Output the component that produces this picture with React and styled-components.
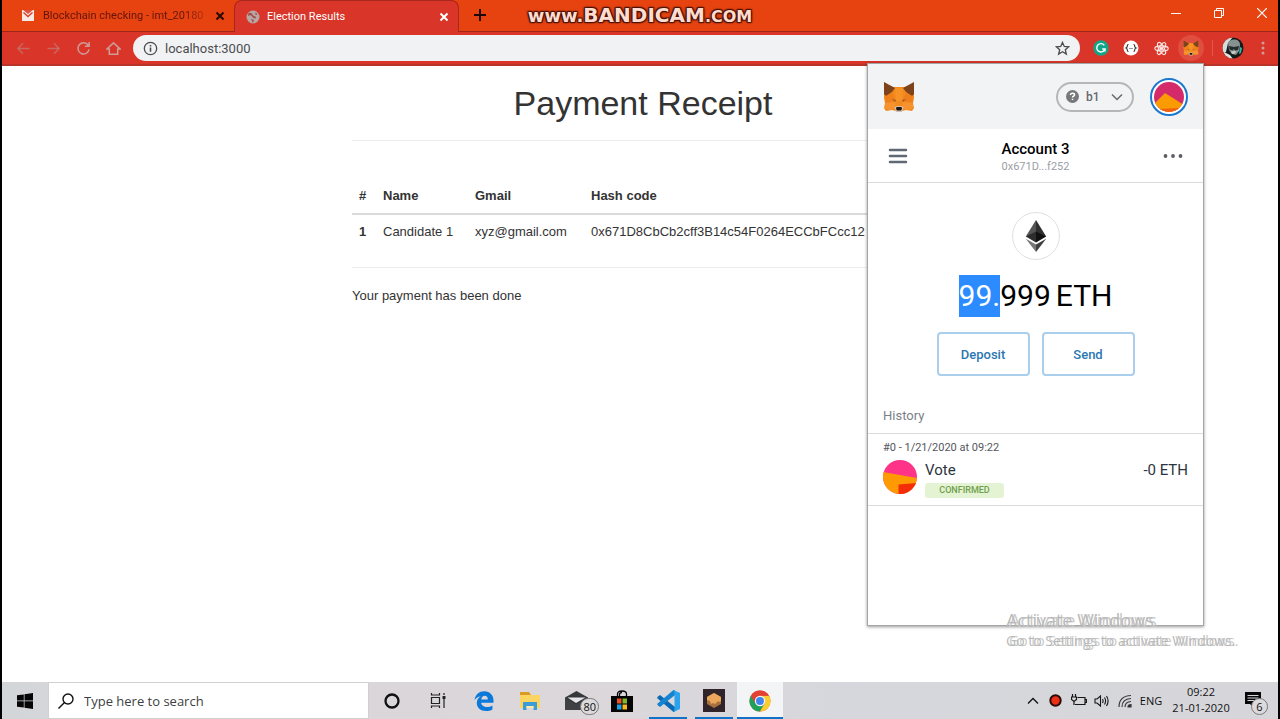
import React from "react";
import styled, { createGlobalStyle, css } from "styled-components";

const ui = `"Open Sans", "Noto Sans", sans-serif`;
const page = `"Liberation Sans", Arial, sans-serif`;
const wallet = `Roboto, "Liberation Sans", sans-serif`;

const GlobalStyle = createGlobalStyle`
  *, *::before, *::after { box-sizing: border-box; }
  body { margin: 0; background: #000; }
  button, input { font: inherit; color: inherit; border: 0; background: none; padding: 0; margin: 0; }
  svg { display: block; flex: none; }
  h1, h2, p { margin: 0; }
`;

const Screen = styled.div`
  position: relative;
  display: flex;
  flex-direction: column;
  min-height: 100vh;
  overflow: hidden;
  background: #fff;
  border: solid #000;
  border-width: 0 2px;
  font-family: ${ui};
`;

/* ---------- browser chrome ---------- */

const TabStrip = styled.header`
  position: relative;
  display: flex;
  align-items: stretch;
  height: 32px;
  background: #e64310;
  border-bottom: 1px solid #9f2419;
`;

const Tab = styled.div`
  display: flex;
  align-items: center;
  gap: ${(p) => (p.$active ? 7 : 9)}px;
  width: ${(p) => (p.$active ? 225 : 232)}px;
  padding: 0 8px 0 ${(p) => (p.$active ? 11 : 20)}px;
  font-family: Roboto, ${ui};
  font-size: 11px;
  white-space: nowrap;
  color: #65140a;
  ${(p) =>
    p.$active &&
    css`
      color: #fff;
      background: #d93529;
      border: 1px solid #a8261b;
      border-bottom: 0;
      border-radius: 8px 8px 0 0;
      margin-bottom: -1px;
    `}
`;

const TabTitle = styled.span`
  flex: 1;
  ${(p) => p.$fade && css`mask-image: linear-gradient(90deg, #000 86%, rgba(0, 0, 0, 0.3));`}
`;

const IconButton = styled.button`
  display: flex;
  align-items: center;
  justify-content: center;
  width: ${(p) => p.$w || 30}px;
  height: ${(p) => p.$h || 30}px;
  color: ${(p) => p.$color || "inherit"};
`;

const ActiveExtension = styled(IconButton)`
  margin-left: 2px;
  border-radius: 50%;
  background: #df4e3f;
`;

const WindowControls = styled.div`
  display: flex;
  gap: 10px;
  margin-left: auto;
  color: #fff;
`;

const Recorder = styled.div`
  position: absolute;
  left: 50%;
  top: 0;
  width: 240px;
  margin-left: -120px;
  display: flex;
  align-items: baseline;
  justify-content: center;
  line-height: 30px;
  font-family: "DejaVu Sans", sans-serif;
  font-weight: 700;
  font-size: 18px;
  color: #ffdcd0;
  text-shadow: 1px 1px 1px #4a1206, -1px -1px 1px #4a1206, 1px -1px 1px #4a1206, -1px 1px 1px #4a1206, 0 0 3px #4a1206;
`;
const RecorderName = styled.span`
  font-size: 20px;
`;
const RecorderDomain = styled.span`
  font-size: 16px;
`;

const Toolbar = styled.div`
  display: flex;
  align-items: center;
  height: 34px;
  padding-left: 6px;
  background: #d93529;
  border-bottom: 2px solid #b93429;
`;

const AddressBar = styled.label`
  display: flex;
  flex: 1;
  align-items: center;
  gap: 7px;
  height: 26px;
  margin: 0 6px 0 5px;
  padding: 0 10px;
  border-radius: 13px;
  background: #f1f2f4;
  color: #4b4d50;
`;
const AddressInput = styled.input`
  flex: 1;
  min-width: 0;
  font-family: Roboto, ${ui};
  font-size: 13px;
  outline: 0;
`;
const Divider = styled.span`
  width: 1px;
  height: 16px;
  margin: 0 5px 0 8px;
  background: #e2564b;
`;

/* ---------- web page ---------- */

const Page = styled.main`
  flex: 1;
  padding-left: 6px;
  background: #fff;
`;
const Receipt = styled.section`
  max-width: 582px;
  margin: 0 auto;
  padding-top: 18px;
  font-family: ${page};
  font-size: 13px;
  line-height: 19px;
  color: #333;
`;
const Title = styled.h1`
  font-size: 34px;
  line-height: 38px;
  font-weight: 400;
  text-align: center;
`;
const Rule = styled.hr`
  height: 1px;
  margin: 18px 0;
  border: 0;
  background: #ececec;
`;
const Table = styled.table`
  width: 100%;
  margin-top: 37px;
  border-collapse: collapse;
  text-align: left;
  th, td { padding: 8px 7px; }
  tbody th, tbody td { padding-top: 7px; }
  thead th { border-bottom: 2px solid #dadada; }
`;
const Col = styled.col`
  width: ${(p) => p.$w};
`;

/* ---------- wallet popup ---------- */

const Popup = styled.aside`
  position: absolute;
  top: 63px;
  right: 74px;
  width: 337px;
  min-height: 563px;
  background: #fff;
  border: 1px solid #a5a5a5;
  box-shadow: 0 1px 3px rgba(0, 0, 0, 0.4);
  font-family: ${wallet};
  color: #000;
`;
const PopupHeader = styled.div`
  display: flex;
  align-items: center;
  gap: 16px;
  height: 65px;
  padding: 0 15px;
  background: #f1f3f4;
`;
const Network = styled.button`
  display: flex;
  align-items: center;
  gap: 7px;
  width: 78px;
  height: 30px;
  margin-left: auto;
  padding: 0 9px 0 8px;
  border: 2px solid #b5b6b9;
  border-radius: 15px;
  font-size: 12px;
  font-weight: 500;
  color: #67696d;
  svg:last-child { margin-left: auto; }
`;
const Identicon = styled.button`
  width: 38px;
  height: 38px;
  padding: 2px;
  border: 2px solid #1c78cc;
  border-radius: 50%;
  background: #fff;
`;
const AccountBar = styled.div`
  display: flex;
  align-items: center;
  justify-content: space-between;
  height: 54px;
  padding: 0 15px;
  border-bottom: 1px solid #d9dadc;
`;
const Account = styled.div`
  padding-top: 2px;
  text-align: center;
`;
const AccountName = styled.h2`
  font-size: 15px;
  line-height: 20px;
  font-weight: 500;
`;
const Small = styled.p`
  font-size: 11px;
  line-height: 16px;
  color: ${(p) => p.$color || "#9b9ea3"};
`;
const Balance = styled.div`
  display: flex;
  flex-direction: column;
  align-items: center;
  padding-top: 29px;
`;
const Coin = styled.div`
  display: flex;
  align-items: center;
  justify-content: center;
  width: 48px;
  height: 48px;
  border: 1px solid #dfe0e2;
  border-radius: 50%;
`;
const Amount = styled.p`
  display: flex;
  gap: 5px;
  margin: 15px 0;
  font-size: 30px;
  line-height: 42px;
`;
const Selected = styled.mark`
  display: inline-block;
  background: #2c8cff;
  color: #fff;
`;
const Actions = styled.div`
  display: flex;
  gap: 12px;
`;
const Action = styled.button`
  width: 93px;
  height: 44px;
  border: 2px solid #a9cfec;
  border-radius: 4px;
  font-size: 13px;
  font-weight: 500;
  color: #2b77b1;
`;
const HistoryTitle = styled.h2`
  margin-top: 22px;
  padding: 9px 15px;
  border-bottom: 1px solid #d9dadc;
  font-size: 13px;
  line-height: 17px;
  font-weight: 400;
  color: #7b7f88;
`;
const Transaction = styled.div`
  padding: 6px 15px 7px;
  border-bottom: 1px solid #d9dadc;
`;
const TxRow = styled.div`
  display: flex;
  gap: 8px;
  padding-top: 4px;
`;
const TxBody = styled.div`
  flex: 1;
  font-size: 15px;
  line-height: 20px;
  color: #2d3440;
`;
const TxAmount = styled.span`
  font-size: 15px;
  line-height: 20px;
  color: #2d3440;
`;
const Status = styled.div`
  width: 79px;
  margin-top: 3px;
  border-radius: 3px;
  background: #e4f3d4;
  font-size: 9px;
  font-weight: 500;
  line-height: 15px;
  text-align: center;
  color: #6fa04c;
`;

/* ---------- desktop ---------- */

const Watermark = styled.div`
  position: absolute;
  right: 47px;
  bottom: 68px;
  width: 225px;
  font-size: 14px;
  line-height: 20px;
  white-space: nowrap;
  color: #b9b9b9;
  text-shadow: 3px 0 0 #c9c9c9;
  pointer-events: none;
`;
const WatermarkTitle = styled.p`
  font-size: 18px;
  line-height: 22px;
`;

const Taskbar = styled.footer`
  display: flex;
  height: 37px;
  background: linear-gradient(90deg, #d3d6d9 0, #dbd6d9 30%, #dcd7da 45%, #d6d7dc 65%, #d6d6da 100%);
  color: #111;
`;
const Search = styled.label`
  display: flex;
  align-items: center;
  gap: 10px;
  width: 321px;
  padding-left: 9px;
  background: #fff;
  border: 1px solid #cfd0d2;
`;
const SearchInput = styled.input`
  flex: 1;
  min-width: 0;
  font-size: 13px;
  outline: 0;
  &::placeholder { color: #3d3f42; opacity: 1; }
`;
const Task = styled.button`
  position: relative;
  display: flex;
  align-items: center;
  justify-content: center;
  width: 46px;
  background: ${(p) => (p.$active ? "#f3f4f6" : "none")};
  &::after {
    content: "";
    display: ${(p) => (p.$open || p.$active ? "block" : "none")};
    position: absolute;
    bottom: 0;
    left: ${(p) => (p.$active ? 0 : 4)}px;
    right: ${(p) => (p.$active ? 0 : 4)}px;
    height: 2px;
    background: #1173c7;
  }
`;
const Badge = styled.span`
  position: absolute;
  right: ${(p) => p.$right}px;
  bottom: 4px;
  min-width: 17px;
  padding: 0 2px;
  border: 1px solid #77787b;
  border-radius: 9px;
  background: #dcdadd;
  font-size: 11px;
  line-height: 15px;
  text-align: center;
`;
const Tray = styled.div`
  display: flex;
  align-items: center;
  margin-left: auto;
  font-size: 11px;
`;
const TrayButton = styled.button`
  position: relative;
  display: flex;
  align-items: center;
  justify-content: center;
  width: ${(p) => p.$w || 23}px;
  height: 37px;
`;
const Clock = styled.time`
  width: 70px;
  padding-bottom: 2px;
  line-height: 16px;
  text-align: center;
`;

/* ---------- drawings ---------- */

const Line = ({ size = 16, w = 1.5, box = 16, children }) => (
  <svg width={size} height={size} viewBox={`0 0 ${box} ${box}`} fill="none" stroke="currentColor" strokeWidth={w}>
    {children}
  </svg>
);

const Cross = ({ size = 10, w = 2 }) => (
  <Line size={size} box={10} w={w}>
    <path d="M1.500 1.500l7 7M8.500 1.500l-7 7" />
  </Line>
);

const Fox = ({ size }) => (
  <svg width={size} height={size} viewBox="0 0 32 32">
    <path d="M1 3l9 3h12l9-3v14l-1 5 1 5-2 3-6-1-4 1h-6l-4-1-6 1-2-3 1-5-1-5z" fill="#f28a1e" />
    <path d="M1 1l11 6-3 4-6 4-2-2zM31 1L20 7l3 4 6 4 2-2z" fill="#7d431c" />
    <path d="M12 7h8l-1 13h-6z" fill="#f79226" />
    <path d="M3 15l6-3 4 8-11 2zM29 15l-6-3-4 8 11 2z" fill="#ee7f1b" />
    <path d="M2 22l10-1 1 7-6 1-5-2zM30 22l-10-1-1 7 6 1 5-2z" fill="#f7932f" />
    <path d="M9 18l4 1-1 2zM23 18l-4 1 1 2z" fill="#a85a25" />
    <path d="M11.500 26l2.500-1h4l2.500 1-1.500 5h-6z" fill="#d5bfb2" />
    <path d="M13.500 26h5l.5 2-1 1.500h-4L13 28z" fill="#1d1714" />
  </svg>
);

const Gmail = () => (
  <svg width="12" height="12" viewBox="0 0 12 12">
    <path d="M0 0h12v11H0z" fill="#fbe9e3" />
    <path d="M1 0h10L6 4z" fill="#e15140" />
    <path d="M1.500 2.500L6 6.500l4.500-4" fill="none" stroke="#d8402c" strokeWidth="1.500" />
  </svg>
);

const Globe = () => (
  <svg width="14" height="14" viewBox="0 0 14 14">
    <circle cx="7" cy="7" r="6.500" fill="#b9a6a3" />
    <path d="M2.500 3q3-1 4 1.500T10 6.500l-.5 2Q7 8.500 6 6.500T2 6zM5 9l3 1-1 3zM9.500 2l2 2.500-2 .5z" fill="#a04e49" />
  </svg>
);

const Info = () => (
  <Line size={15} w={1.400}>
    <circle cx="8" cy="8" r="6.600" />
    <path d="M8 7v4.500M8 4.200v1.600" strokeWidth="1.700" />
  </Line>
);

const Star = () => (
  <Line size={15} w={1.400}>
    <path d="M8 1.500l1.900 4.300 4.600.4-3.500 3.100 1.100 4.600L8 11.400l-4.100 2.500L5 9.300 1.500 6.200l4.600-.4z" />
  </Line>
);

const Grammarly = () => (
  <svg width="16" height="16" viewBox="0 0 16 16">
    <circle cx="8" cy="8" r="7.700" fill="#12a688" />
    <path d="M11.300 5.200A4.200 4.200 0 1 0 12 9H9.200M12 9v2.500" fill="none" stroke="#fff" strokeWidth="1.400" />
  </svg>
);

const Json = () => (
  <svg width="16" height="16" viewBox="0 0 16 16">
    <circle cx="8" cy="8" r="7.500" fill="#fff" />
    <path d="M5.500 4.500q-1.200 0-1.200 1.500t-1.300 2q1.300.5 1.300 2t1.200 1.500M10.500 4.500q1.200 0 1.200 1.500t1.300 2q-1.300.5-1.300 2t-1.200 1.500" fill="none" stroke="#333" strokeWidth="1.200" />
    <path d="M6.500 8.500h1M8.500 8.500h1" stroke="#333" strokeWidth="1.200" />
  </svg>
);

const ReactMark = () => (
  <svg width="15" height="15" viewBox="0 0 16 16" fill="none" stroke="#fbe7e5" strokeWidth="1.200">
    <ellipse cx="8" cy="8" rx="7.200" ry="2.800" />
    <ellipse cx="8" cy="8" rx="7.200" ry="2.800" transform="rotate(60 8 8)" />
    <ellipse cx="8" cy="8" rx="7.200" ry="2.800" transform="rotate(120 8 8)" />
    <circle cx="8" cy="8" r="1.300" fill="#fbe7e5" />
  </svg>
);

const Portrait = () => (
  <svg width="22" height="22" viewBox="0 0 22 22">
    <clipPath id="portrait"><circle cx="11" cy="11" r="10.500" /></clipPath>
    <g clipPath="url(#portrait)">
      <path d="M0 0h22v22H0z" fill="#141b1b" />
      <path d="M0 0h11L6 6l-2 9-4 1z" fill="#d5ded8" />
      <path d="M6 6q2-4 7-3.500T18 8l-1 6-3 4-4-1-3-4z" fill="#87918f" />
      <path d="M7 9l5 1 5-1-1 4-3 .5-1-1.500-1.500 1.500-3-1z" fill="#232b2e" />
      <path d="M9 14.500l5-.5-1 2.500-3 .5z" fill="#c9cfcb" />
      <path d="M2 15l6 3 3 4H2z" fill="#dfe5e1" />
      <path d="M18 10l2 1-1 5-2 1z" fill="#39b3a0" />
    </g>
  </svg>
);

const AccountArt = () => (
  <svg width="30" height="30" viewBox="0 0 30 30">
    <clipPath id="account-art"><circle cx="15" cy="15" r="15" /></clipPath>
    <g clipPath="url(#account-art)">
      <path d="M0 0h30v30H0z" fill="#d42a69" />
      <path d="M0 22L11 11l19 12v7H0z" fill="#fb9b04" />
      <path d="M4 27l22-1v4H4z" fill="#f1600d" />
    </g>
  </svg>
);

const ContractArt = () => (
  <svg width="34" height="34" viewBox="0 0 34 34">
    <clipPath id="contract-art"><circle cx="17" cy="17" r="17" /></clipPath>
    <g clipPath="url(#contract-art)">
      <path d="M0 0h34v34H0z" fill="#ff3489" />
      <path d="M0 12l34 6v16H0z" fill="#ff9a02" />
      <path d="M15.500 24.500L34 23v11H15.500z" fill="#f52c08" />
    </g>
  </svg>
);

const Ether = () => (
  <svg width="22" height="34" viewBox="0 0 22 34">
    <path d="M11 1v17.500L.8 17.500z" fill="#555" />
    <path d="M11 1l10.200 16.500L11 18.500z" fill="#303030" />
    <path d="M11 12.500v11L.8 17.500z" fill="#2d2d2d" />
    <path d="M11 12.500l10.200 5L11 23.500z" fill="#111" />
    <path d="M.8 19.800L11 25.500V33z" fill="#777" />
    <path d="M21.200 19.800L11 25.500V33z" fill="#404040" />
  </svg>
);

const WindowsLogo = () => (
  <svg width="16" height="16" viewBox="0 0 16 16" fill="#050505">
    <path d="M0 2.300l6.800-.9v6.200H0zM7.500 1.300L16 0v7.600H7.500zM0 8.300h6.800v6.300L0 13.700zM7.500 8.300H16V16l-8.500-1.300z" />
  </svg>
);

const TaskView = () => (
  <svg width="17" height="15" viewBox="0 0 17 15" fill="none" stroke="#222" strokeWidth="1.200">
    <path d="M1.500 0v2h8V0M1.500 15v-2h8v2M1.500 4.500h8v6h-8zM14 0v2M14 6v9" />
    <path d="M12.500 3h3v3h-3z" fill="#222" stroke="none" />
  </svg>
);

const Edge = () => (
  <svg width="20" height="20" viewBox="0 0 20 20">
    <path d="M.5 9C1.500 3.500 5.300.3 10.300.3c5.500 0 9.200 3.900 9.200 9.300v2.200H7.200c.2 2.700 2.700 4.200 5.600 4.200 2 0 4-.6 5.600-1.600v4c-1.800 1-4 1.500-6.400 1.500-5.600 0-9.200-3.300-9.200-8 0-3 1.500-5.300 4-6.700C4 5.800 2 7 .5 9zm6.800-.6h6.500c0-2.200-1.100-3.600-3.100-3.600-1.900 0-3.200 1.500-3.400 3.600z" fill="#0b79da" />
  </svg>
);

const Folder = () => (
  <svg width="22" height="19" viewBox="0 0 22 19">
    <path d="M1 1h9l2 3H1z" fill="#dd9a20" />
    <path d="M1 4h20v13H1z" fill="#fcd462" />
    <path d="M4 11h14v8h-3.500v-4h-7v4H4z" fill="#3d9bd8" />
    <path d="M7.500 15h7v2h-7z" fill="#fcecae" />
  </svg>
);

const Mail = () => (
  <svg width="23" height="20" viewBox="0 0 23 20">
    <path d="M0 6.500L11.500 0 23 6.500V19H0z" fill="#37383c" />
    <path d="M2.500 6.500h18L11 12z" fill="#e6e5e7" />
    <path d="M0 7l11 6.500L23 7v12H0z" fill="#404145" />
  </svg>
);

const Store = () => (
  <svg width="22" height="22" viewBox="0 0 22 22">
    <path d="M6.500 7V4q0-3 4.500-3t4.500 3v3M8.500 6V4.500q0-2 2.500-2" fill="none" stroke="#050505" strokeWidth="1.300" />
    <path d="M0 6h22v16H0z" fill="#050505" />
    <path d="M6 8.500h4.500v5H6z" fill="#ee5028" />
    <path d="M11.500 8.500H16v5h-4.500z" fill="#7db928" />
    <path d="M6 14.500h4.500v5H6z" fill="#1ba0e6" />
    <path d="M11.500 14.500H16v5h-4.500z" fill="#fbb81c" />
  </svg>
);

const Code = () => (
  <svg width="23" height="22" viewBox="0 0 23 22">
    <path d="M1 6.500l2-1.500L18 17v4.500L16.500 22 0 8z" fill="#0b6ab5" />
    <path d="M1 15.500L3 17 18 5V.5L16.500 0 0 14z" fill="#1583d0" />
    <path d="M16.500 0L23 3v16l-6.500 3 1-3V3z" fill="#2ba3ee" />
  </svg>
);

const Ganache = () => (
  <svg width="22" height="23" viewBox="0 0 22 23">
    <path d="M0 0h22v23H0z" fill="#30242a" />
    <path d="M4 8l7-4 7 4v7l-7 4-7-4z" fill="#a9713d" />
    <path d="M4 8l7-4 7 4v4l-2 1-1-1-3 3-2-1-2 1-1-3-3-1z" fill="#eba65c" />
  </svg>
);

const Chrome = () => (
  <svg width="22" height="22" viewBox="0 0 22 22">
    <circle cx="11" cy="11" r="10.500" fill="#e34133" />
    <path d="M1.900 5.750A10.500 10.500 0 0 0 11 21.500l4.550-7.870L11 11z" fill="#1fa15a" />
    <path d="M20.100 5.750A10.500 10.500 0 0 1 11 21.500l4.550-7.870L11 5.750z" fill="#fccd2f" />
    <path d="M11 5.750h9.100A10.500 10.500 0 0 0 1.900 5.750l4.550 7.880z" fill="#e34133" />
    <circle cx="11" cy="11" r="5.200" fill="#f5f7fa" />
    <circle cx="11" cy="11" r="4" fill="#4285ec" />
  </svg>
);

const Battery = () => (
  <svg width="16" height="13" viewBox="0 0 16 13" fill="none" stroke="#161616" strokeWidth="1.200">
    <path d="M6.500 3.500H14v7H4M14.500 5.500h1v3h-1M1.500 0v3M4.500 0v3M.5 3h5v2.500L3 7.500.5 5.500zM3 7.500V11" />
  </svg>
);
const Speaker = () => (
  <svg width="16" height="14" viewBox="0 0 16 14" fill="none" stroke="#161616" strokeWidth="1.100">
    <path d="M1 5h2l3.500-3v10L3 9H1zM8.500 5q1.200 2 0 4M10.500 3.500q2.200 3.500 0 7M12.500 2q3.200 5 0 10" />
  </svg>
);
const Wifi = () => (
  <svg width="14" height="14" viewBox="0 0 14 14" fill="none" stroke="#3c3c3e" strokeWidth="1.200">
    <path d="M1 13Q1 2 13 1.500M4 13q0-8 9-8.500M7 13q0-5 6-5.500" />
    <path d="M10 13q0-2.500 3-2.500V13z" fill="#222" />
  </svg>
);

const navigation = [
  ["Back", <path d="M14.500 8H2M7.500 2.500L2 8l5.500 5.500" />, "#c9685f"],
  ["Forward", <path d="M1.500 8H14M8.500 2.500L14 8l-5.500 5.500" />, "#c9685f"],
  ["Reload", <path d="M13 4.500A6 6 0 1 0 14 9M14 1v4.500H9.500" />, "#cf9b96"],
  ["Home", <path d="M1 8.500L8 2l7 6.500h-2.500V14h-9V8.500z" />, "#cf9b96"],
];

const extensions = [
  ["Grammarly", <Grammarly />],
  ["JSON Viewer", <Json />],
  ["React Developer Tools", <ReactMark />],
];

const tasks = [
  { label: "Cortana", icon: <Line w={2.300}><circle cx="8" cy="8" r="6.500" /></Line> },
  { label: "Task View", icon: <TaskView /> },
  { label: "Edge", icon: <Edge /> },
  { label: "File Explorer", icon: <Folder /> },
  { label: "Mail", icon: <Mail />, badge: "80" },
  { label: "Store", icon: <Store /> },
  { label: "Visual Studio Code", icon: <Code />, open: true },
  { label: "Ganache", icon: <Ganache />, open: true },
  { label: "Chrome", icon: <Chrome />, active: true },
];

function Wallet() {
  return (
    <Popup>
      <PopupHeader>
        <Fox size={32} />
        <Network>
          <svg width="13" height="13" viewBox="0 0 14 14">
            <circle cx="7" cy="7" r="7" fill="#77787c" />
            <path d="M4.800 5.400q0-2 2.200-2t2.200 1.700q0 1-1.200 1.600-1 .5-1 1.500M7 9.300v1.600" fill="none" stroke="#fff" strokeWidth="1.600" />
          </svg>
          b1
          <Line size={12} w={1.500} box={12}><path d="M1 3.500l5 5 5-5" /></Line>
        </Network>
        <Identicon aria-label="Accounts"><AccountArt /></Identicon>
      </PopupHeader>
      <AccountBar>
        <IconButton aria-label="Menu" $color="#5f6873">
          <Line size={20} box={20} w={2.600}><path d="M2 4h16M2 10h16M2 16h16" strokeLinecap="round" /></Line>
        </IconButton>
        <Account>
          <AccountName>Account 3</AccountName>
          <Small>0x671D...f252</Small>
        </Account>
        <IconButton aria-label="Account options" $color="#5b5d63">
          <svg width="20" height="4" viewBox="0 0 20 4" fill="currentColor">
            <circle cx="2.500" cy="2" r="1.900" /><circle cx="10" cy="2" r="1.900" /><circle cx="17.500" cy="2" r="1.900" />
          </svg>
        </IconButton>
      </AccountBar>
      <Balance>
        <Coin><Ether /></Coin>
        <Amount>
          <span><Selected>99.</Selected>999</span>
          <span>ETH</span>
        </Amount>
        <Actions>
          <Action>Deposit</Action>
          <Action>Send</Action>
        </Actions>
      </Balance>
      <HistoryTitle>History</HistoryTitle>
      <Transaction>
        <Small $color="#54575e">#0 - 1/21/2020 at 09:22</Small>
        <TxRow>
          <ContractArt />
          <TxBody>
            Vote
            <Status>CONFIRMED</Status>
          </TxBody>
          <TxAmount>-0 ETH</TxAmount>
        </TxRow>
      </Transaction>
    </Popup>
  );
}

export default function App() {
  return (
    <Screen>
      <GlobalStyle />
      <TabStrip>
        <Tab>
          <Gmail />
          <TabTitle $fade>Blockchain checking - imt_20180</TabTitle>
          <IconButton aria-label="Close tab" $w={12} $h={16} $color="#2c0805"><Cross /></IconButton>
        </Tab>
        <Tab $active>
          <Globe />
          <TabTitle>Election Results</TabTitle>
          <IconButton aria-label="Close tab" $w={12} $h={16}><Cross /></IconButton>
        </Tab>
        <IconButton aria-label="New tab" $w={42} $color="#1e0603">
          <Line size={12} box={12} w={2}><path d="M6 0v12M0 6h12" /></Line>
        </IconButton>
        <Recorder>
          www.<RecorderName>BANDICAM</RecorderName><RecorderDomain>.COM</RecorderDomain>
        </Recorder>
        <WindowControls>
          <IconButton aria-label="Minimize" $w={33} $h={26}><Line size={10} box={10} w={1}><path d="M0 5.500h10" /></Line></IconButton>
          <IconButton aria-label="Restore" $w={33} $h={26}><Line size={10} box={10} w={1}><path d="M.5 2.500h7v7h-7zM2.500 2.500v-2h7v7h-2" /></Line></IconButton>
          <IconButton aria-label="Close" $w={33} $h={26}><Line size={10} box={10} w={1.200}><path d="M0 0l10 10M10 0L0 10" /></Line></IconButton>
        </WindowControls>
      </TabStrip>

      <Toolbar>
        {navigation.map(([label, shape, color]) => (
          <IconButton key={label} aria-label={label} $color={color}>
            <Line size={15} w={1.600}>{shape}</Line>
          </IconButton>
        ))}
        <AddressBar>
          <Info />
          <AddressInput aria-label="Address" defaultValue="localhost:3000" />
          <Star />
        </AddressBar>
        {extensions.map(([label, icon]) => (
          <IconButton key={label} aria-label={label}>{icon}</IconButton>
        ))}
        <ActiveExtension aria-label="MetaMask" $w={26} $h={26}><Fox size={16} /></ActiveExtension>
        <Divider />
        <IconButton aria-label="Profile"><Portrait /></IconButton>
        <IconButton aria-label="Browser menu" $color="#d99a94">
          <svg width="4" height="14" viewBox="0 0 4 14" fill="currentColor">
            <circle cx="2" cy="2" r="1.500" /><circle cx="2" cy="7" r="1.500" /><circle cx="2" cy="12" r="1.500" />
          </svg>
        </IconButton>
      </Toolbar>

      <Page>
        <Receipt>
          <Title>Payment Receipt</Title>
          <Rule />
          <Table>
            <colgroup>
              <Col $w="24px" /><Col $w="92px" /><Col $w="116px" /><Col />
            </colgroup>
            <thead>
              <tr><th>#</th><th>Name</th><th>Gmail</th><th>Hash code</th></tr>
            </thead>
            <tbody>
              <tr>
                <th>1</th>
                <td>Candidate 1</td>
                <td>xyz@gmail.com</td>
                <td>0x671D8CbCb2cff3B14c54F0264ECCbFCcc12</td>
              </tr>
            </tbody>
          </Table>
          <Rule />
          <p>Your payment has been done</p>
        </Receipt>
      </Page>

      <Wallet />

      <Watermark>
        <WatermarkTitle>Activate Windows</WatermarkTitle>
        <p>Go to Settings to activate Windows.</p>
      </Watermark>

      <Taskbar>
        <Task aria-label="Start"><WindowsLogo /></Task>
        <Search>
          <Line size={16} w={1.400}><circle cx="10" cy="6" r="5" /><path d="M6.500 9.500L.5 15.500" /></Line>
          <SearchInput aria-label="Search" placeholder="Type here to search" />
        </Search>
        {tasks.map((t) => (
          <Task key={t.label} aria-label={t.label} $open={t.open} $active={t.active}>
            {t.icon}
            {t.badge && <Badge $right={0}>{t.badge}</Badge>}
          </Task>
        ))}
        <Tray>
          <TrayButton aria-label="Hidden icons"><Line size={12} box={12} w={1.300}><path d="M1 8.500l5-5 5 5" /></Line></TrayButton>
          <TrayButton aria-label="Recorder">
            <svg width="13" height="13" viewBox="0 0 13 13"><circle cx="6.500" cy="6.500" r="5.200" fill="#ed3015" stroke="#2a0c08" strokeWidth="2" /></svg>
          </TrayButton>
          <TrayButton aria-label="Battery"><Battery /></TrayButton>
          <TrayButton aria-label="Volume"><Speaker /></TrayButton>
          <TrayButton aria-label="Network"><Wifi /></TrayButton>
          <TrayButton $w={30}>ENG</TrayButton>
          <Clock>09:22<br />21-01-2020</Clock>
          <TrayButton $w={42} aria-label="Notifications">
            <svg width="24" height="17" viewBox="0 0 24 17">
              <path d="M0 0h16v12H9v4l-4-4H0z" fill="#080808" />
              <path d="M2.500 3.500h11M2.500 6h11M2.500 8.500h7" stroke="#d6d6da" strokeWidth="1" />
            </svg>
            <Badge $right={10}>6</Badge>
          </TrayButton>
        </Tray>
      </Taskbar>
    </Screen>
  );
}
